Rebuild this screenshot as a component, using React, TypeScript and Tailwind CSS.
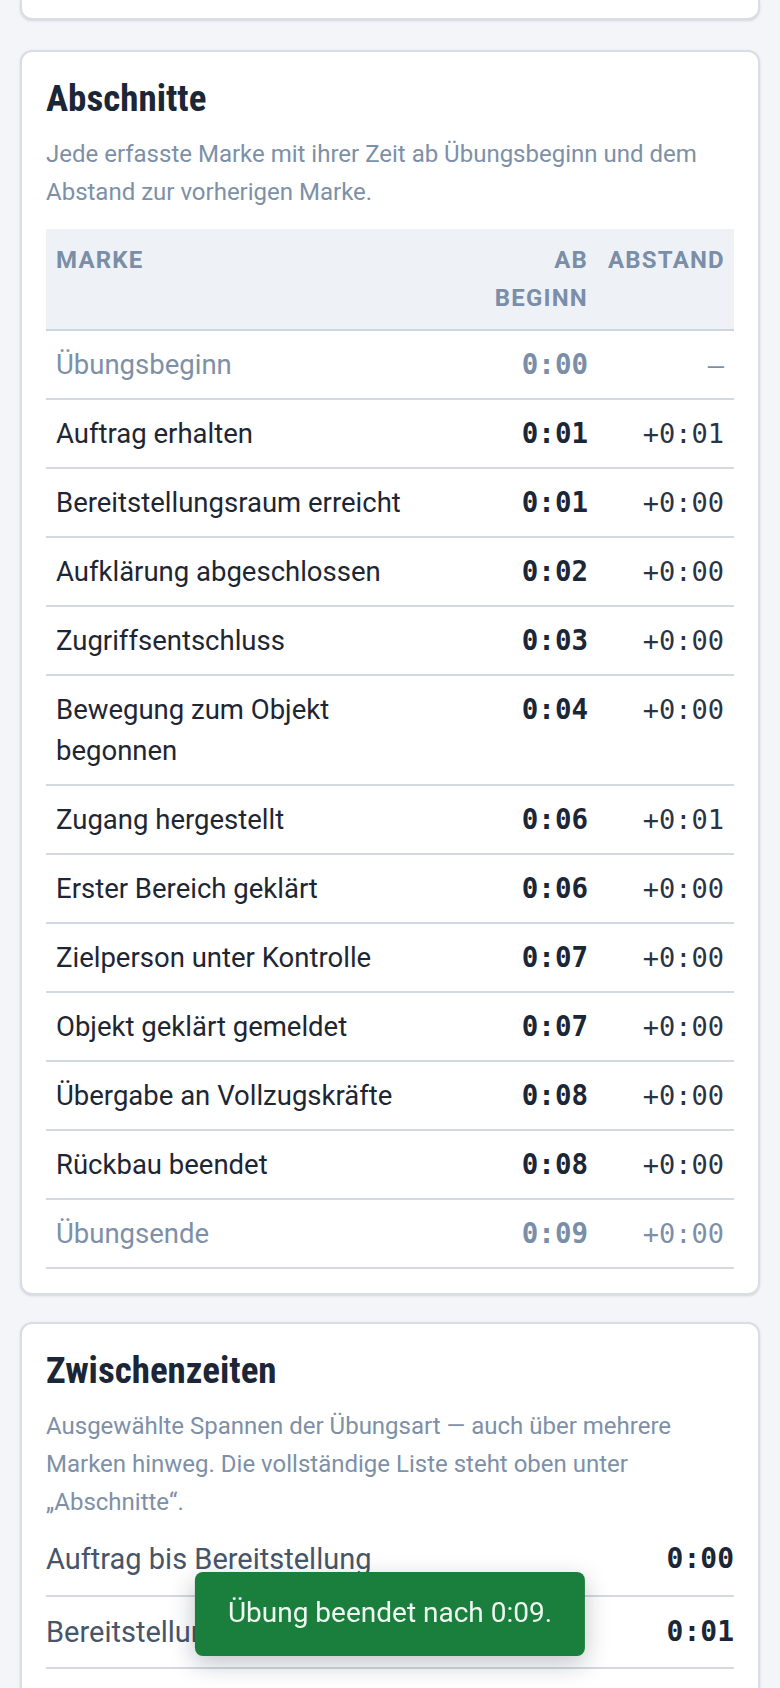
import React from 'react';

type Mark = {
  label: string;
  at: string;
  diff: string;
  muted?: boolean;
};

// Marks recorded during the exercise
const marks: Mark[] = [
  { label: 'Übungsbeginn', at: '0:00', diff: '–', muted: true },
  { label: 'Auftrag erhalten', at: '0:01', diff: '+0:01' },
  { label: 'Bereitstellungsraum erreicht', at: '0:01', diff: '+0:00' },
  { label: 'Aufklärung abgeschlossen', at: '0:02', diff: '+0:00' },
  { label: 'Zugriffsentschluss', at: '0:03', diff: '+0:00' },
  { label: 'Bewegung zum Objekt begonnen', at: '0:04', diff: '+0:00' },
  { label: 'Zugang hergestellt', at: '0:06', diff: '+0:01' },
  { label: 'Erster Bereich geklärt', at: '0:06', diff: '+0:00' },
  { label: 'Zielperson unter Kontrolle', at: '0:07', diff: '+0:00' },
  { label: 'Objekt geklärt gemeldet', at: '0:07', diff: '+0:00' },
  { label: 'Übergabe an Vollzugskräfte', at: '0:08', diff: '+0:00' },
  { label: 'Rückbau beendet', at: '0:08', diff: '+0:00' },
  { label: 'Übungsende', at: '0:09', diff: '+0:00', muted: true },
];

// Selected spans
const splits = [
  { label: 'Auftrag bis Bereitstellung', time: '0:00' },
  { label: 'Bereitstellung bis Zugriff', time: '0:01' },
  { label: 'Zugriff bis Objekt geklärt', time: '0:04' },
  { label: 'Gesamtdauer', time: '0:09' },
];

const headingFont =
  "[font-family:'Roboto_Condensed','Liberation_Sans_Narrow','Arial_Narrow','DejaVu_Sans_Condensed',Roboto,sans-serif] font-stretch-condensed";
const monoFont = "[font-family:'DejaVu_Sans_Mono',monospace]";

const Card: React.FC<{ title: string; className?: string; children: React.ReactNode }> = ({
  title,
  className = '',
  children,
}) => (
  <section className={`rounded-[12px] border-2 border-[#d9dee5] bg-white px-[24px] pt-[25px] pb-[24px] shadow-sm ${className}`}>
    <h2 className={`${headingFont} text-[37px] font-bold leading-[44px] text-[#1b2636]`}>{title}</h2>
    {children}
  </section>
);

const App: React.FC = () => {
  return (
    <div className="min-h-screen bg-[#f3f5f9] px-[20px] pb-[40px] font-['Roboto',sans-serif]">
      <div className="flex flex-col">
        {/* Previous card, cut off at the top */}
        <div className="h-[20px] rounded-b-[12px] border-2 border-t-0 border-[#d9dee5] bg-white shadow-sm" />

        <Card title="Abschnitte" className="mt-[30px]">
          <p className="mt-[14px] text-[24px] leading-[38px] text-[#7d90a7]">
            Jede erfasste Marke mit ihrer Zeit ab Übungsbeginn und dem Abstand zur vorherigen Marke.
          </p>

          <table className="mt-[18px] w-full table-fixed border-collapse">
            <colgroup>
              <col />
              <col className="w-[150px]" />
              <col className="w-[136px]" />
            </colgroup>
            <thead>
              <tr className="border-b-2 border-[#cfd6df] bg-[#eef2f7] text-[24px] font-bold uppercase leading-[38px] tracking-[0.05em] text-[#7b8ea8]">
                <th className="px-[10px] py-[12px] text-left align-top font-bold">Marke</th>
                <th className="px-[10px] py-[12px] text-right align-top font-bold">
                  Ab
                  <br />
                  Beginn
                </th>
                <th className="px-[10px] py-[12px] text-right align-top font-bold">Abstand</th>
              </tr>
            </thead>
            <tbody>
              {marks.map((m) => (
                <tr key={m.label} className="border-b-2 border-[#d3d9e1] text-[27.5px] leading-[41px]">
                  <td className={`px-[10px] py-[13px] align-top ${m.muted ? 'text-[#7d90a7]' : 'text-[#1e2633]'}`}>
                    {m.label}
                  </td>
                  <td
                    className={`${monoFont} px-[10px] py-[13px] text-right align-top font-bold ${
                      m.muted ? 'text-[#7b8ea8]' : 'text-[#1b2636]'
                    }`}
                  >
                    {m.at}
                  </td>
                  <td
                    className={`${monoFont} px-[10px] py-[13px] text-right align-top text-[27px] ${
                      m.muted ? 'text-[#7d90a7]' : 'text-[#2a3444]'
                    }`}
                  >
                    {m.diff}
                  </td>
                </tr>
              ))}
            </tbody>
          </table>
        </Card>

        <Card title="Zwischenzeiten" className="mt-[27px]">
          <p className="mt-[14px] text-[24px] leading-[38px] text-[#7d90a7]">
            Ausgewählte Spannen der Übungsart — auch über mehrere Marken hinweg. Die vollständige Liste steht oben
            unter „Abschnitte“.
          </p>
          <ul className="mt-[3px]">
            {splits.map((s) => (
              <li
                key={s.label}
                className="flex items-center justify-between border-b-2 border-[#d3d9e1] py-[13px] text-[29px] leading-[44.5px]"
              >
                <span className="text-[#475569]">{s.label}</span>
                <span className={`${monoFont} text-[28px] font-bold text-[#1b2636]`}>{s.time}</span>
              </li>
            ))}
          </ul>
        </Card>
      </div>

      {/* Toast */}
      <div className="fixed bottom-[32px] left-1/2 -translate-x-1/2 whitespace-nowrap rounded-[8px] bg-[#1a7f3c] px-[33px] pt-[19px] pb-[21px] text-[28px] leading-[44px] text-[#eef8f1] shadow-[0_8px_24px_rgba(15,23,42,0.25)]">
        Übung beendet nach 0:09.
      </div>
    </div>
  );
};

export default App;
